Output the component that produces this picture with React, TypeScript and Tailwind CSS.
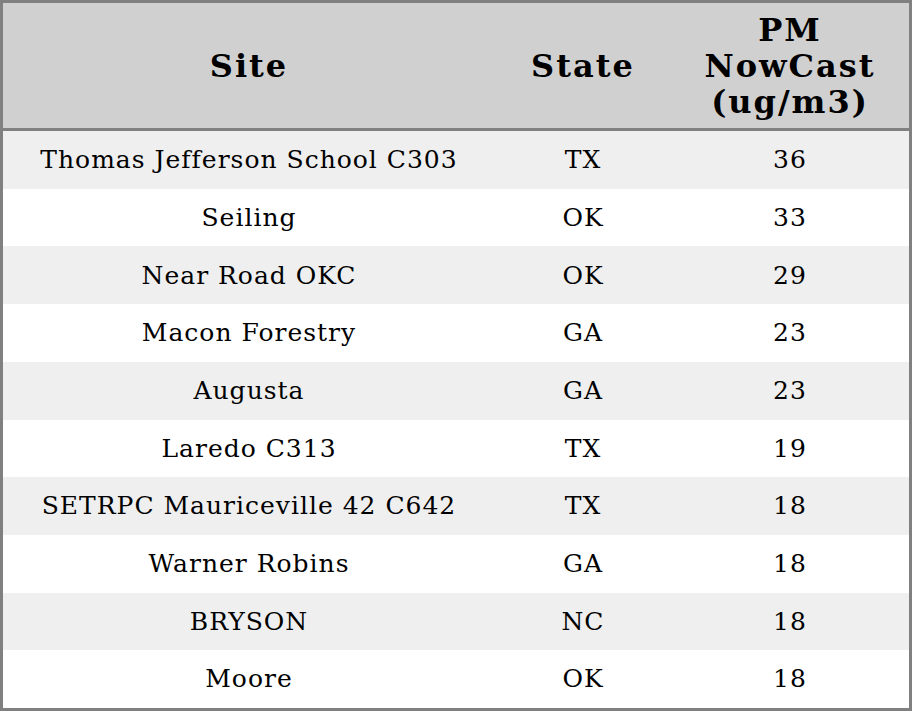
const rows: [string, string, string][] = [
  ["Thomas Jefferson School C303", "TX", "36"],
  ["Seiling", "OK", "33"],
  ["Near Road OKC", "OK", "29"],
  ["Macon Forestry", "GA", "23"],
  ["Augusta", "GA", "23"],
  ["Laredo C313", "TX", "19"],
  ["SETRPC Mauriceville 42 C642", "TX", "18"],
  ["Warner Robins", "GA", "18"],
  ["BRYSON", "NC", "18"],
  ["Moore", "OK", "18"],
];

export default function App() {
  return (
    <div className="w-[912px] h-[711px] bg-white font-['DejaVu_Serif',serif] text-black">
      <div className="flex h-full flex-col border-[3px] border-[#808080]">
        <div className="grid h-[128px] shrink-0 grid-cols-[492px_176px_1fr] items-center border-b-[3px] border-[#808080] bg-[#d0d0d0] text-center text-[32px] font-bold leading-[36px] tracking-[2px]">
          <div>Site</div>
          <div>State</div>
          <div>
            PM
            <br />
            NowCast
            <br />
            (ug/m3)
          </div>
        </div>
        <div className="flex flex-1 flex-col">
          {rows.map(([site, state, value], i) => (
            <div
              key={site}
              className={`grid flex-1 grid-cols-[492px_176px_1fr] items-center text-center text-[25px] tracking-[1px] ${
                i % 2 === 0 ? "bg-[#efefef]" : "bg-white"
              }`}
            >
              <div>{site}</div>
              <div>{state}</div>
              <div>{value}</div>
            </div>
          ))}
        </div>
      </div>
    </div>
  );
}
